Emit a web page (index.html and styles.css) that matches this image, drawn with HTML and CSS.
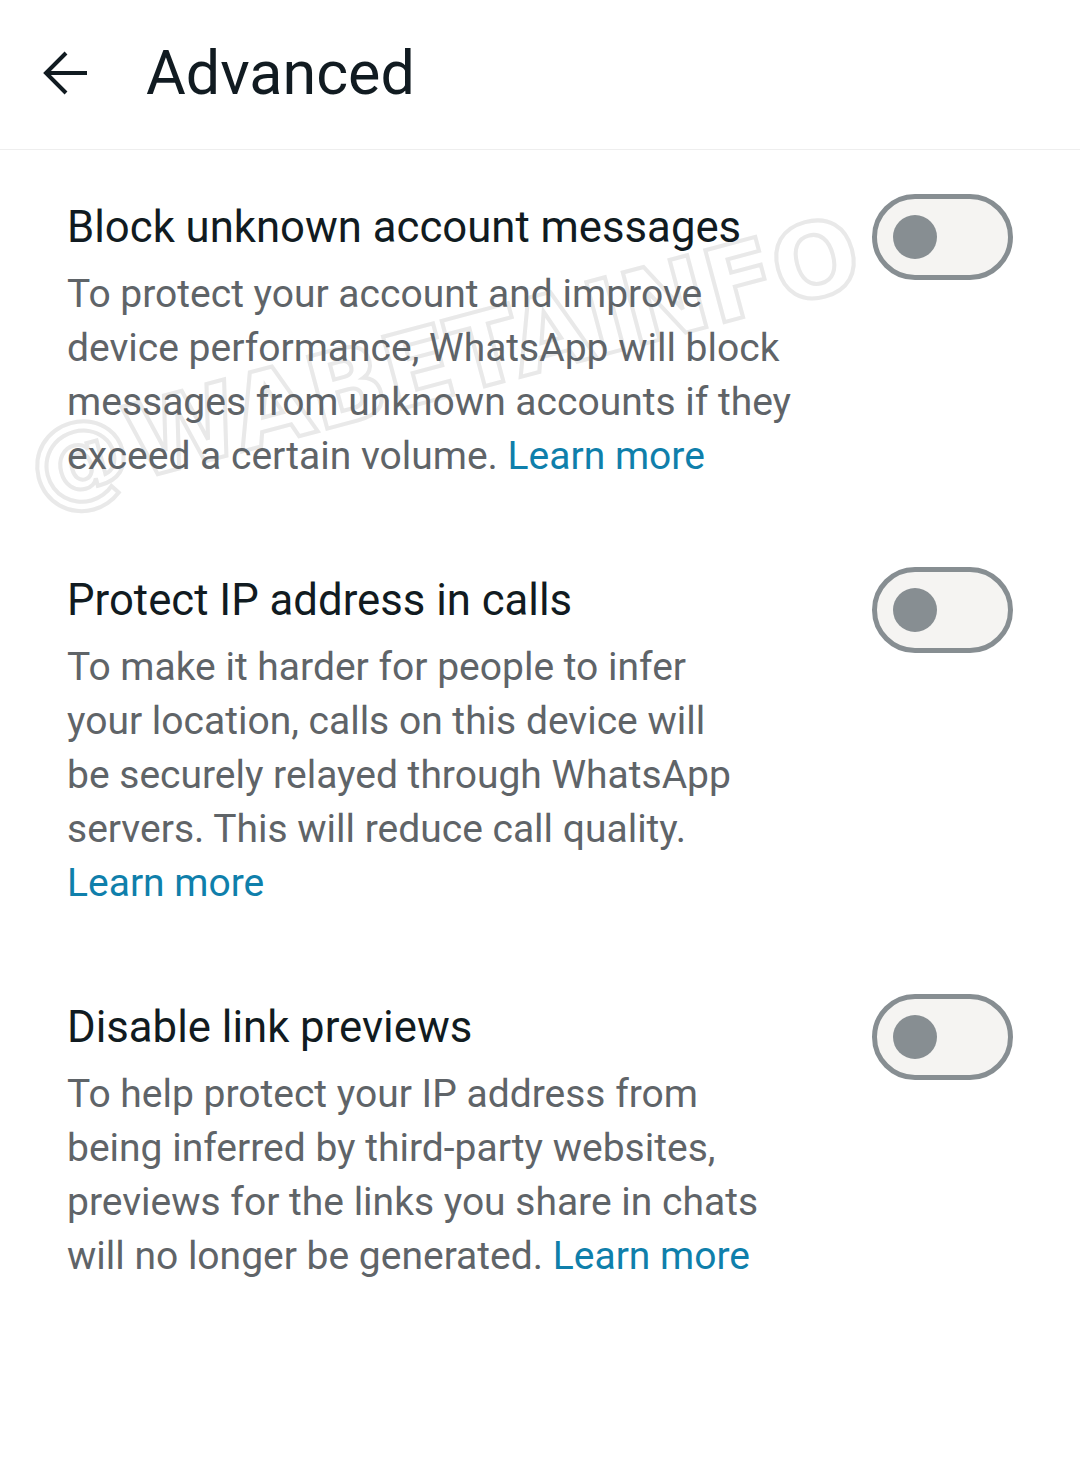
FILE: index.html
```html
<!DOCTYPE html>
<html lang="en">
<head>
<meta charset="utf-8">
<title>Advanced</title>
<link rel="stylesheet" href="styles.css">
</head>
<body>
<div class="page">
  <header class="appbar">
    <button class="back" aria-label="Back">
      <svg width="44" height="44" viewBox="0 0 44 44" aria-hidden="true">
        <path d="M3 22 H44 M23 2 L3 22 L23 42" fill="none" stroke="#111b21" stroke-width="4" stroke-linecap="butt" stroke-linejoin="miter"/>
      </svg>
    </button>
    <h1 class="appbar-title">Advanced</h1>
  </header>

  <main class="list">
    <div class="watermark" aria-hidden="true">@WABETAINFO</div>

    <section class="setting">
      <div class="setting-text">
        <h2 class="setting-title">Block unknown account messages</h2>
        <p class="setting-desc">To protect your account and improve<br>device performance, WhatsApp will block<br>messages from unknown accounts if they<br>exceed a certain volume. <a class="link" href="#">Learn more</a></p>
      </div>
      <div class="switch" role="switch" aria-checked="false"><span class="knob"></span></div>
    </section>

    <section class="setting">
      <div class="setting-text">
        <h2 class="setting-title">Protect IP address in calls</h2>
        <p class="setting-desc">To make it harder for people to infer<br>your location, calls on this device will<br>be securely relayed through WhatsApp<br>servers. This will reduce call quality.<br><a class="link" href="#">Learn more</a></p>
      </div>
      <div class="switch" role="switch" aria-checked="false"><span class="knob"></span></div>
    </section>

    <section class="setting">
      <div class="setting-text">
        <h2 class="setting-title">Disable link previews</h2>
        <p class="setting-desc">To help protect your IP address from<br>being inferred by third-party websites,<br>previews for the links you share in chats<br>will no longer be generated. <a class="link" href="#">Learn more</a></p>
      </div>
      <div class="switch" role="switch" aria-checked="false"><span class="knob"></span></div>
    </section>
  </main>
</div>
</body>
</html>
```

FILE: styles.css
```css
* { box-sizing: border-box; }

html, body {
  margin: 0;
  padding: 0;
  background: #ffffff;
}

body {
  font-family: Roboto, "Noto Sans", "Liberation Sans", sans-serif;
  color: #111b21;
  width: 1080px;
  height: 1467px;
  overflow: hidden;
}

.page {
  width: 1080px;
}

.appbar {
  height: 150px;
  display: flex;
  align-items: center;
  padding-left: 43px;
  border-bottom: 1px solid #eeeeee;
}

.back {
  background: none;
  border: 0;
  padding: 0;
  margin: 0 0 3px 0;
  width: 44px;
  height: 44px;
  display: flex;
}

.appbar-title {
  margin: 0 0 0 59px;
  font-size: 61px;
  font-weight: 400;
  color: #111b21;
  line-height: 1;
  padding-bottom: 2px;
}

.list {
  position: relative;
  padding: 44px 67px 0 67px;
}

.setting {
  display: flex;
  justify-content: space-between;
  align-items: flex-start;
  margin-bottom: 84px;
  position: relative;
  z-index: 1;
}

.setting-text {
  padding-top: 5px;
}

.setting-title {
  margin: 0;
  font-size: 43.7px;
  font-weight: 400;
  line-height: 56px;
  color: #111b21;
}

.setting-desc {
  margin: 12px 0 0 0;
  font-size: 39px;
  line-height: 54px;
  color: #5f6468;
}

.link {
  color: #0f7fab;
  text-decoration: none;
}

.switch {
  width: 141px;
  height: 86px;
  border: 5px solid #878e92;
  border-radius: 43px;
  background: #f5f4f2;
  display: flex;
  align-items: center;
  padding-left: 16px;
  flex-shrink: 0;
}

.knob {
  width: 44px;
  height: 44px;
  border-radius: 50%;
  background: #878e92;
}

.watermark {
  position: absolute;
  left: 30px;
  top: 262px;
  width: 820px;
  font-family: "DejaVu Sans", sans-serif;
  font-weight: 700;
  font-size: 102px;
  letter-spacing: 0;
  color: rgba(255, 255, 255, 0.5);
  -webkit-text-stroke: 4px #e9e9e9;
  transform: rotate(-15deg);
  transform-origin: left center;
  white-space: nowrap;
  pointer-events: none;
  z-index: 0;
}
```
